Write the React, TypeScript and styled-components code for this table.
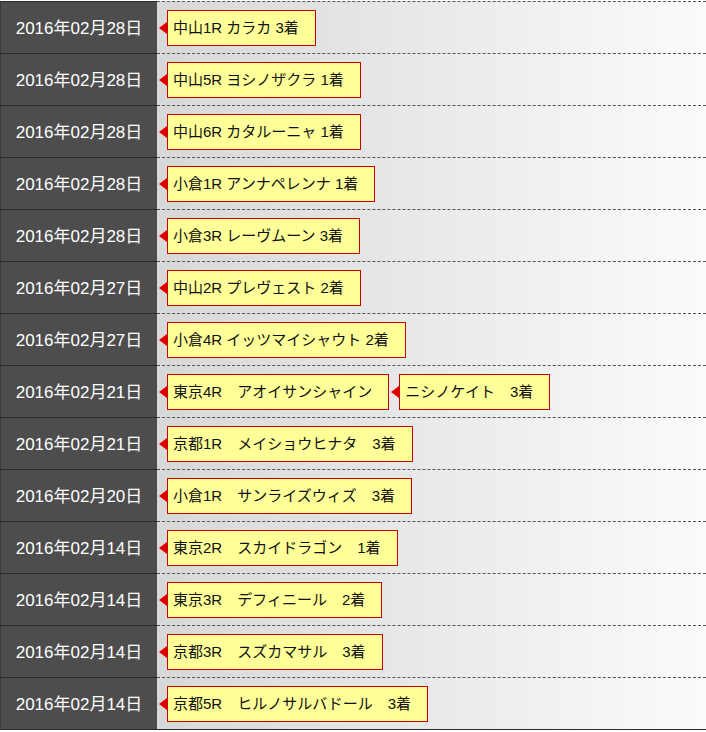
import React from 'react'
import styled, { createGlobalStyle } from 'styled-components'

const GlobalStyle = createGlobalStyle`
  html, body {
    margin: 0;
    padding: 0;
    background: #ffffff;
  }
  body {
    font-family: "Liberation Sans", "Noto Sans CJK JP", sans-serif;
  }
`

type Race = { label: string }
type Entry = { date: string; races: Race[] }

const entries: Entry[] = [
  { date: '2016年02月28日', races: [{ label: '中山1R カラカ 3着' }] },
  { date: '2016年02月28日', races: [{ label: '中山5R ヨシノザクラ 1着' }] },
  { date: '2016年02月28日', races: [{ label: '中山6R カタルーニャ 1着' }] },
  { date: '2016年02月28日', races: [{ label: '小倉1R アンナペレンナ 1着' }] },
  { date: '2016年02月28日', races: [{ label: '小倉3R レーヴムーン 3着' }] },
  { date: '2016年02月27日', races: [{ label: '中山2R プレヴェスト 2着' }] },
  { date: '2016年02月27日', races: [{ label: '小倉4R イッツマイシャウト 2着' }] },
  {
    date: '2016年02月21日',
    races: [{ label: '東京4R　アオイサンシャイン' }, { label: 'ニシノケイト　3着' }],
  },
  { date: '2016年02月21日', races: [{ label: '京都1R　メイショウヒナタ　3着' }] },
  { date: '2016年02月20日', races: [{ label: '小倉1R　サンライズウィズ　3着' }] },
  { date: '2016年02月14日', races: [{ label: '東京2R　スカイドラゴン　1着' }] },
  { date: '2016年02月14日', races: [{ label: '東京3R　デフィニール　2着' }] },
  { date: '2016年02月14日', races: [{ label: '京都3R　スズカマサル　3着' }] },
  { date: '2016年02月14日', races: [{ label: '京都5R　ヒルノサルバドール　3着' }] },
]

const ResultTable = styled.div`
  display: flex;
  flex-direction: column;
  padding-top: 1px;
  border-bottom: 1px solid #2b2b2b;
`

const Row = styled.div`
  display: flex;
  height: 52px;
`

const DateCell = styled.div`
  flex: 0 0 157px;
  display: flex;
  align-items: center;
  justify-content: center;
  padding-bottom: 3px;
  background: #4d4d4d;
  border-left: 1px solid #3a3a3a;
  border-top: 1px solid #2b2b2b;
  color: #ffffff;
  font-size: 17px;
  box-sizing: border-box;
`

const RaceCell = styled.div`
  flex: 1;
  display: flex;
  align-items: center;
  gap: 2px;
  padding-left: 2px;
  border-top: 1px dashed #555555;
  background: linear-gradient(to right, #d8d8d8, #fbfbfb);
`

const RaceTag = styled.span`
  position: relative;
  margin-left: 8px;
  height: 36px;
  box-sizing: border-box;
  display: flex;
  align-items: center;
  padding: 0 16px 2px 5px;
  background: #ffff99;
  border: 1px solid #cc0000;
  color: #111111;
  font-size: 15px;
  white-space: pre;

  &::before {
    content: '';
    position: absolute;
    left: -9px;
    top: 50%;
    margin-top: -6px;
    border-style: solid;
    border-width: 6px 8px 6px 0;
    border-color: transparent #dd0000 transparent transparent;
  }
`

export default function App() {
  return (
    <>
      <GlobalStyle />
      <ResultTable>
        {entries.map((entry, i) => (
          <Row key={i}>
            <DateCell>{entry.date}</DateCell>
            <RaceCell>
              {entry.races.map((race, j) => (
                <RaceTag key={j}>{race.label}</RaceTag>
              ))}
            </RaceCell>
          </Row>
        ))}
      </ResultTable>
    </>
  )
}
